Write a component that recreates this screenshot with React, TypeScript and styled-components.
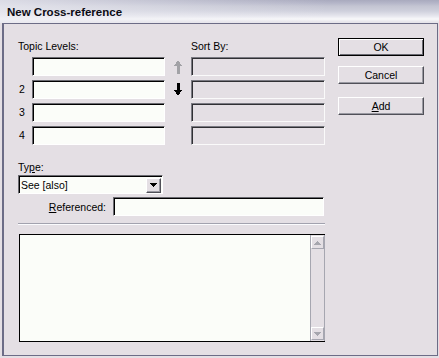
import React from 'react';
import styled, { createGlobalStyle } from 'styled-components';

const Global = createGlobalStyle`
  html, body { margin: 0; padding: 0; }
  body {
    width: 439px; height: 358px; overflow: hidden;
    background: #e4dfe4;
    font-family: "Liberation Sans", Arial, sans-serif;
    font-size: 10.5px; color: #000;
  }
  * { box-sizing: border-box; }
`;

const Window = styled.div`
  width: 439px; height: 358px;
  display: flex; flex-direction: column;
  background: #e4dfe4;
`;

const TitleBar = styled.div`
  height: 23px; flex: none;
  display: flex; align-items: center;
  padding: 1px 0 0 7px;
  background:
    linear-gradient(to right, rgba(236,236,242,0.75) 0, rgba(236,236,242,0.35) 40%, rgba(236,236,242,0) 75%),
    linear-gradient(#a9aabe 0, #b4b5c8 3px, #c3c4d2 6px, #cfd0dc 11px, #e6e6ee 16px, #f8f8fa 19px, #e6e4ea 22px);
  font-weight: bold; font-size: 11.5px; color: #0c0c14;
`;

const Frame = styled.div`
  flex: 1;
  margin: 0 1px 2px 2px;
  border: 1px solid #6c6c86;
  border-left-width: 2px;
  display: flex; gap: 13px;
  padding: 14px 0 0 14px;
`;

const Main = styled.div`
  width: 307px;
  display: flex; flex-direction: column;
`;

const TopicGrid = styled.div`
  display: grid;
  grid-template-columns: 14px 133px 26px 134px;
  grid-template-rows: 15px repeat(4, 19px);
  row-gap: 4px;
  align-items: center;
`;

const Label = styled.span<{ $col?: string }>`
  grid-column: ${p => p.$col ?? 'auto'};
  align-self: end;
  line-height: 13px;
  white-space: nowrap;
`;

const Num = styled.span`
  grid-column: 1;
  line-height: 13px;
  padding-left: 1px;
`;

const Field = styled.div<{ $disabled?: boolean; $width?: number }>`
  width: ${p => (p.$width ? `${p.$width}px` : '100%')};
  height: 19px;
  border: 1px solid;
  border-color: ${p => (p.$disabled ? '#7a7a82 #fafafa #fafafa #7a7a82' : '#6a6a70 #ffffff #ffffff #6a6a70')};
  box-shadow: inset 1px 1px 0 ${p => (p.$disabled ? '#303034' : '#000')};
  background: ${p => (p.$disabled ? '#e4dfe4' : '#fbfdf9')};
`;

const ArrowCell = styled.div`
  grid-column: 3;
  display: flex; justify-content: center;
  padding-right: 1px;
`;

const TypeLabel = styled.div`
  margin-top: 16px;
  line-height: 13px;
`;

const Select = styled.div`
  margin-top: 1px;
  width: 145px; height: 19px;
  border: 1px solid;
  border-color: #6a6a70 #ffffff #ffffff #6a6a70;
  box-shadow: inset 1px 1px 0 #000;
  background: #fbfdf9;
  display: flex; align-items: center; justify-content: space-between;
  padding: 1px 1px 0 2px;
`;

const SelectText = styled.span`
  line-height: 13px;
`;

const SelectButton = styled.div`
  width: 15px; height: 15px;
  background: #e4dfe4;
  border: 1px solid;
  border-color: #ffffff #505058 #505058 #ffffff;
  box-shadow: inset -1px -1px 0 #9a9aa2;
  display: flex; align-items: center; justify-content: center;
`;

const RefRow = styled.div`
  margin-top: 3px;
  display: flex; justify-content: flex-end; align-items: center;
  gap: 7px;
  padding-right: 1px;
`;

const Separator = styled.div`
  margin-top: 7px;
  height: 2px;
  border-top: 1px solid #a2a2ae;
  border-bottom: 1px solid #fbfbfd;
`;

const ListBox = styled.div`
  margin: 9px 0 0 1px;
  width: 306px; height: 108px;
  display: flex;
  border: 1px solid #000;
  border-right: none;
`;

const ListContent = styled.div`
  flex: 1;
  background: #fbfdf9;
`;

const ScrollBar = styled.div`
  width: 15px;
  display: flex; flex-direction: column; justify-content: space-between;
  background: #e4dfe4;
  border-left: 1px solid #a6a6b0;
  border-right: 1px solid #a6a6b0;
  padding: 1px 0;
`;

const ScrollButton = styled.div`
  height: 13px;
  border: 1px solid;
  border-color: #ffffff #a6a6b0 #a6a6b0 #ffffff;
  display: flex; align-items: center; justify-content: center;
`;

const Buttons = styled.div`
  width: 86px;
  display: flex; flex-direction: column;
`;

const Button = styled.div<{ $default?: boolean; $gap?: number }>`
  margin-top: ${p => p.$gap ?? 0}px;
  height: 18px;
  display: flex; align-items: center; justify-content: center;
  line-height: 13px;
  background: #e4dfe4;
  border: 1px solid;
  border-color: ${p => (p.$default ? '#000 #000 #000 #000' : '#ffffff #505058 #505058 #ffffff')};
  box-shadow: ${p =>
    p.$default
      ? 'inset 1px 1px 0 #ffffff, inset -1px -1px 0 #6a6a72'
      : 'inset -1px -1px 0 #9a9aa2'};
`;

const UpArrow = ({ color }: { color: string }) => (
  <svg width="8" height="14" viewBox="0 0 8 14" shapeRendering="crispEdges">
    <polygon points="4,0 8,6 5.5,6 5.5,14 2.5,14 2.5,6 0,6" fill={color} />
  </svg>
);

const DownArrow = ({ color }: { color: string }) => (
  <svg width="8" height="13" viewBox="0 0 8 13" shapeRendering="crispEdges">
    <polygon points="2.5,0 5.5,0 5.5,7 8,7 4,13 0,7 2.5,7" fill={color} />
  </svg>
);

const Triangle = ({ up, color }: { up?: boolean; color: string }) => (
  <svg width="7" height="4" viewBox="0 0 7 4" shapeRendering="crispEdges">
    <polygon points={up ? '3.5,0 7,4 0,4' : '0,0 7,0 3.5,4'} fill={color} />
  </svg>
);

export default function App() {
  const rows = ['', '2', '3', '4'];
  return (
    <>
      <Global />
      <Window>
        <TitleBar>New Cross-reference</TitleBar>
        <Frame>
          <Main>
            <TopicGrid>
              <Label $col="1 / 3">Topic Levels:</Label>
              <Label $col="4">Sort By:</Label>
              {rows.map((n, i) => (
                <React.Fragment key={i}>
                  <Num>{n}</Num>
                  <Field />
                  <ArrowCell>
                    {i === 0 && <UpArrow color="#a2a2a6" />}
                    {i === 1 && <DownArrow color="#000" />}
                  </ArrowCell>
                  <Field $disabled />
                </React.Fragment>
              ))}
            </TopicGrid>
            <TypeLabel>
              Ty<u>p</u>e:
            </TypeLabel>
            <Select>
              <SelectText>See [also]</SelectText>
              <SelectButton>
                <Triangle color="#000" />
              </SelectButton>
            </Select>
            <RefRow>
              <span>
                <u>R</u>eferenced:
              </span>
              <Field $width={211} />
            </RefRow>
            <Separator />
            <ListBox>
              <ListContent />
              <ScrollBar>
                <ScrollButton>
                  <Triangle up color="#a6a6ae" />
                </ScrollButton>
                <ScrollButton>
                  <Triangle color="#a6a6ae" />
                </ScrollButton>
              </ScrollBar>
            </ListBox>
          </Main>
          <Buttons>
            <Button $default>OK</Button>
            <Button $gap={10}>Cancel</Button>
            <Button $gap={13}>
              <span>
                <u>A</u>dd
              </span>
            </Button>
          </Buttons>
        </Frame>
      </Window>
    </>
  );
}
